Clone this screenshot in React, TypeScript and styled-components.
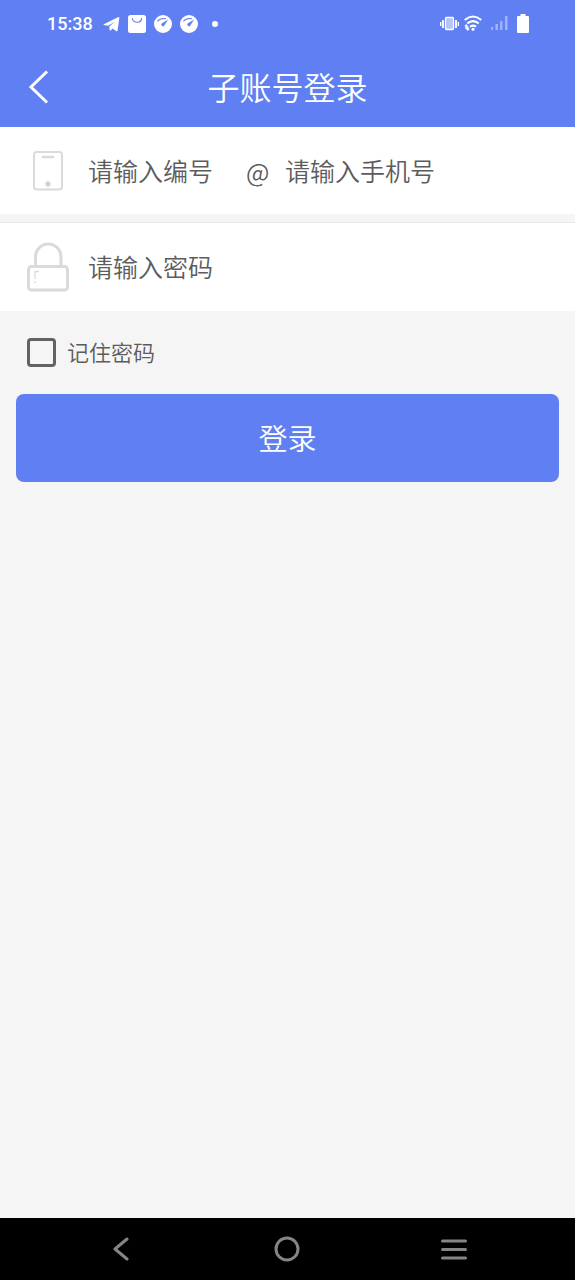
import React from "react";
import styled, { createGlobalStyle } from "styled-components";

const BLUE = "#5f7ff3";

const GlobalStyle = createGlobalStyle`
  * { box-sizing: border-box; }
  body {
    margin: 0;
    background: #f5f5f5;
    font-family: "Noto Sans CJK SC", sans-serif;
    font-weight: 350;
  }
`;

const Screen = styled.div`
  display: flex;
  flex-direction: column;
  min-height: 100vh;
`;

const StatusBar = styled.div`
  display: flex;
  align-items: center;
  justify-content: space-between;
  height: 47px;
  padding: 0 46px 0 47px;
  background: ${BLUE};
  color: #fff;
`;

const StatusGroup = styled.div<{ $gap: number }>`
  display: flex;
  align-items: center;
  gap: ${(p) => p.$gap}px;
  svg { display: block; }
`;

const Clock = styled.time`
  margin-right: 2px;
  font: 500 18px/24px Roboto, sans-serif;
`;

const Header = styled.header`
  display: grid;
  grid-template-columns: 78px 1fr 78px;
  align-items: center;
  height: 80px;
  background: ${BLUE};
`;

const IconButton = styled.button`
  display: flex;
  align-items: center;
  justify-content: center;
  height: 100%;
  padding: 0;
  border: 0;
  background: none;
`;

const Title = styled.h1`
  margin: 0;
  padding-bottom: 2px;
  color: #fff;
  font-size: 32px;
  font-weight: inherit;
  line-height: 48px;
  text-align: center;
`;

const Form = styled.form`
  flex: 1;
`;

const Field = styled.div<{ $divided?: boolean }>`
  display: flex;
  align-items: center;
  height: ${(p) => (p.$divided ? 89 : 87)}px;
  margin-top: ${(p) => (p.$divided ? 8 : 0)}px;
  border-top: ${(p) => (p.$divided ? "1px solid #e9e9e9" : "0")};
  background: #fff;
`;

const FieldIcon = styled.div`
  display: flex;
  justify-content: center;
  width: 48px;
  margin: 0 16px 0 24px;
`;

const TextInput = styled.input<{ $width?: number }>`
  flex: ${(p) => (p.$width ? `0 0 ${p.$width}px` : "1")};
  min-width: 0;
  height: 40px;
  padding: 0 0 2px;
  border: 0;
  outline: 0;
  background: none;
  color: #333;
  font-family: inherit;
  font-size: 25px;
  font-weight: inherit;
  &::placeholder { color: #5c5c5c; opacity: 1; }
`;

const At = styled.span`
  width: 39px;
  color: #5c5c5c;
  font-size: 25px;
  line-height: 40px;
`;

const Remember = styled.label`
  display: flex;
  align-items: center;
  gap: 11px;
  width: max-content;
  height: 83px;
  padding-left: 27px;
  color: #5c5c5c;
  font-size: 22px;
  line-height: 32px;
`;

const RememberText = styled.span`
  padding-bottom: 3px;
`;

const Checkbox = styled.input`
  appearance: none;
  width: 29px;
  height: 29px;
  margin: 0;
  border: 3px solid #626262;
  border-radius: 4px;
  &:checked { background: #626262; }
`;

const SubmitButton = styled.button`
  display: block;
  width: calc(100% - 32px);
  height: 88px;
  margin: 0 16px;
  padding: 0 0 2px;
  border: 0;
  border-radius: 8px;
  background: ${BLUE};
  color: #fff;
  font-family: inherit;
  font-size: 29px;
  font-weight: inherit;
`;

const NavBar = styled.nav`
  display: grid;
  grid-template-columns: repeat(3, 1fr);
  height: 62px;
  padding: 0 38px;
  background: #000;
`;

function Gauge() {
  return (
    <svg width="18" height="18" viewBox="0 0 18 18">
      <circle cx="9" cy="9" r="9" fill="#fff" />
      <path d="M3.4 6.4Q6.5 2.600 12 3.800" fill="none" stroke={BLUE} strokeWidth="1.1" />
      <path d="M14.2 4.500 10.4 10.200A1.600 1.600 0 1 1 8 8.300z" fill={BLUE} />
    </svg>
  );
}

export default function App() {
  return (
    <Screen>
      <GlobalStyle />
      <StatusBar>
        <StatusGroup $gap={8}>
          <Clock>15:38</Clock>
          <svg width="17" height="18" viewBox="0 0 17 18" fill="#fff">
            <path d="M.7 9.200 15 2.200Q16.500 1.700 16.300 3L14.600 15.400Q14.300 16.700 13 15.900L9.500 13.500 7.600 15.400Q6.700 16 6.600 14.800L6.300 11.400 11.500 6.900 5 10.700 1 10.100Q.1 9.800.7 9.200z" />
          </svg>
          <svg width="18" height="18" viewBox="0 0 18 18">
            <rect width="18" height="18" rx="2.500" fill="#fff" />
            <path d="M4.500 3.500c0 5 9 5 9 0" fill="none" stroke={BLUE} strokeWidth="1.200" strokeLinecap="round" />
          </svg>
          <Gauge />
          <Gauge />
          <svg width="18" height="18" viewBox="0 0 18 18">
            <circle cx="9" cy="9" r="3" fill="#fff" />
          </svg>
        </StatusGroup>
        <StatusGroup $gap={5}>
          <svg width="19" height="18" viewBox="0 0 19 18" fill="none" stroke="#fff">
            <rect x="5.500" y="2.500" width="8" height="12" rx="1" fill="#b4c3fa" strokeWidth="1.300" />
            <path d="M3 5v8M16 5v8" strokeWidth="1.800" />
            <path d="M.7 7v4M18.300 7v4" strokeWidth="1.400" />
          </svg>
          <svg width="18" height="18" viewBox="0 0 18 18" fill="none" stroke="#fff" strokeWidth="2">
            <path d="M.7 4.900Q9-1.900 17.300 4.900M3.300 8.400Q9 3.800 14.700 8.400M6 11.800Q9 9.400 12 11.800" />
            <circle cx="9" cy="14.200" r="1.500" fill="#fff" stroke="none" />
            <path d="M.3 11.300 2.200 9 4.100 11.300zM1.800 13.500 3.800 16 5.800 13.500z" fill="#fff" stroke="none" />
            <path d="M2.200 11v3M3.800 11.500v3" strokeWidth="1.500" />
          </svg>
          <svg width="25" height="18" viewBox="0 0 25 18" fill="#9fb2f8">
            <path d="M4 12h2v3H4zM8.500 9h2.500v6H8.500zM13 6h2.500v9H13zM18 1h2.500v14H18z" />
          </svg>
          <svg width="12" height="20" viewBox="0 0 12 20" fill="#fff">
            <path d="M3.500 0h5v2H11q1 0 1 1v15q0 1-1 1H1q-1 0-1-1V3q0-1 1-1h2.500z" />
          </svg>
        </StatusGroup>
      </StatusBar>

      <Header>
        <IconButton type="button" aria-label="返回">
          <svg width="24" height="36" viewBox="0 0 24 36" fill="none" stroke="#fff" strokeWidth="3">
            <path d="M20 2.500 4 18l16 15.500" />
          </svg>
        </IconButton>
        <Title>子账号登录</Title>
      </Header>

      <Form onSubmit={(e) => e.preventDefault()}>
        <Field>
          <FieldIcon>
            <svg width="30" height="40" viewBox="0 0 30 40" fill="none" stroke="#dadada" strokeWidth="2">
              <rect x="1" y="1" width="28" height="37.500" rx="3" />
              <path d="M9 6h12" strokeWidth="2.500" />
              <circle cx="15" cy="33" r="2.700" fill="#d4d4d4" stroke="none" />
            </svg>
          </FieldIcon>
          <TextInput $width={158} aria-label="编号" placeholder="请输入编号" />
          <At>@</At>
          <TextInput type="tel" aria-label="手机号" placeholder="请输入手机号" />
        </Field>
        <Field $divided>
          <FieldIcon>
            <svg width="42" height="50" viewBox="0 0 42 50" fill="none" stroke="#dadada" strokeWidth="3">
              <rect x="1.500" y="24.500" width="39" height="23.500" rx="3" />
              <path d="M8.500 24V15a12.700 13 0 0 1 25.500 0v9" />
              <path d="M12 29.500H8V37M8 39v2" strokeWidth="1.300" />
            </svg>
          </FieldIcon>
          <TextInput type="password" aria-label="密码" placeholder="请输入密码" />
        </Field>
        <Remember>
          <Checkbox type="checkbox" />
          <RememberText>记住密码</RememberText>
        </Remember>
        <SubmitButton type="submit">登录</SubmitButton>
      </Form>

      <NavBar>
        <IconButton type="button" aria-label="后退">
          <svg width="16" height="24" viewBox="0 0 16 24" fill="none" stroke="#858585" strokeWidth="3" strokeLinecap="round" strokeLinejoin="round">
            <path d="M14 2 2 12l12 10" />
          </svg>
        </IconButton>
        <IconButton type="button" aria-label="主页">
          <svg width="26" height="26" viewBox="0 0 26 26" fill="none" stroke="#858585" strokeWidth="3">
            <circle cx="13" cy="13" r="11" />
          </svg>
        </IconButton>
        <IconButton type="button" aria-label="菜单">
          <svg width="26" height="22" viewBox="0 0 26 22" fill="none" stroke="#858585" strokeWidth="3" strokeLinecap="round">
            <path d="M1.500 3h23M1.500 11.500h23M1.500 20h23" />
          </svg>
        </IconButton>
      </NavBar>
    </Screen>
  );
}
